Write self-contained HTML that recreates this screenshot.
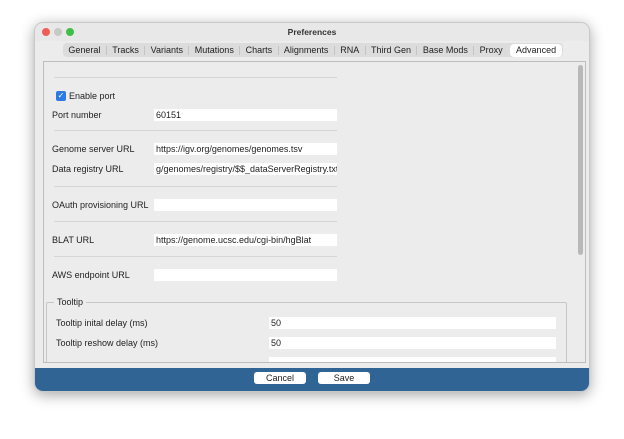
<!DOCTYPE html>
<html><head><style>
body{margin:0;width:624px;height:439px;background:#fff;font-family:"Liberation Sans",sans-serif;font-size:9px;color:#1e1e1e;position:relative;overflow:hidden}
.win{position:absolute;left:34px;top:22px;width:556px;height:370px;background:#ececec;border-radius:9px;box-shadow:0 3px 14px rgba(0,0,0,.35);overflow:hidden;border:1px solid #c8c8c8;box-sizing:border-box}
.title{position:absolute;left:0;right:0;top:0;height:18px;background:#e8e8e8;text-align:center;line-height:18px;font-weight:bold;font-size:8.5px;color:#333}
.dot{position:absolute;top:5px;width:8px;height:8px;border-radius:50%}
.tabs{position:absolute;left:28px;top:20px;height:14px;width:500px;background:#dcdcdc;border-radius:4px;display:flex;align-items:center;font-size:9px}
.tabs span{padding:0 5.4px;border-right:1px solid #c4c4c4;line-height:9px;white-space:nowrap}
.tabs span.a{background:#fff;border-radius:4px;border:none;line-height:13px;padding:0 6px;margin-left:2px}
.panel{position:absolute;left:8px;top:38px;width:541px;height:300px;border:1px solid #bdbdbd;background:#ececec;overflow:hidden}
.abs{position:absolute}
.sep{position:absolute;left:10px;width:283px;height:1px;background:#d6d6d6}
.f{position:absolute;left:110px;width:183px;height:12px;background:#fff;line-height:12px;padding-left:2px;box-sizing:border-box;white-space:nowrap;overflow:hidden}
.sb{position:absolute;right:3px;top:4px;width:5px;height:190px;background:#b8b8b8;border-radius:3px}
.foot{position:absolute;left:0;right:0;bottom:0;height:23px;background:#2f6494}
.btn{position:absolute;top:4px;height:12px;width:52px;background:#fff;border-radius:3px;text-align:center;line-height:12px}
</style></head><body>
<div class="win">
<div class="title">Preferences</div>
<div class="dot" style="left:7px;background:#ed5f56"></div>
<div class="dot" style="left:19px;background:#c8c8c8"></div>
<div class="dot" style="left:31px;background:#3fbf47"></div>
<div class="tabs"><span>General</span><span>Tracks</span><span>Variants</span><span>Mutations</span><span>Charts</span><span>Alignments</span><span>RNA</span><span>Third Gen</span><span>Base Mods</span><span style="border:none">Proxy</span><span class="a">Advanced</span></div>
<div class="panel">
<div class="sb" style="right:2px;top:3px"></div>
<div class="sep" style="top:15px"></div>
<div class="abs" style="left:12px;top:29px;width:10px;height:10px;background:#2c7be5;border-radius:2px;color:#fff;font-size:8px;line-height:10px;text-align:center">✓</div>
<div class="abs" style="left:25px;top:29px;line-height:10px">Enable port</div>
<div class="abs" style="left:8px;top:47px;line-height:12px">Port number</div><div class="f" style="top:47px">60151</div>
<div class="sep" style="top:68px"></div>
<div class="abs" style="left:8px;top:81px;line-height:12px">Genome server URL</div><div class="f" style="top:81px">https://igv.org/genomes/genomes.tsv</div>
<div class="abs" style="left:8px;top:101px;line-height:12px">Data registry URL</div><div class="f" style="top:101px">g/genomes/registry/$$_dataServerRegistry.txt</div>
<div class="sep" style="top:124px"></div>
<div class="abs" style="left:8px;top:137px;line-height:12px">OAuth provisioning URL</div><div class="f" style="top:137px"></div>
<div class="sep" style="top:159px"></div>
<div class="abs" style="left:8px;top:172px;line-height:12px">BLAT URL</div><div class="f" style="top:172px">https://genome.ucsc.edu/cgi-bin/hgBlat</div>
<div class="sep" style="top:194px"></div>
<div class="abs" style="left:8px;top:207px;line-height:12px">AWS endpoint URL</div><div class="f" style="top:207px"></div>
<div class="abs" style="left:2px;top:240px;width:519px;height:70px;border:1px solid #c6c6c6;border-radius:2px"></div>
<div class="abs" style="left:10px;top:235px;background:#ececec;padding:0 3px;line-height:10px">Tooltip</div>
<div class="abs" style="left:12px;top:255px;line-height:12px">Tooltip inital delay (ms)</div><div class="f" style="top:255px;left:225px;width:287px">50</div>
<div class="abs" style="left:12px;top:275px;line-height:12px">Tooltip reshow delay (ms)</div><div class="f" style="top:275px;left:225px;width:287px">50</div>
<div class="f" style="top:295px;left:225px;width:287px"></div>
</div>
<div class="foot">
<div class="btn" style="left:219px">Cancel</div>
<div class="btn" style="left:283px">Save</div>
</div>
</div>
</body></html>
